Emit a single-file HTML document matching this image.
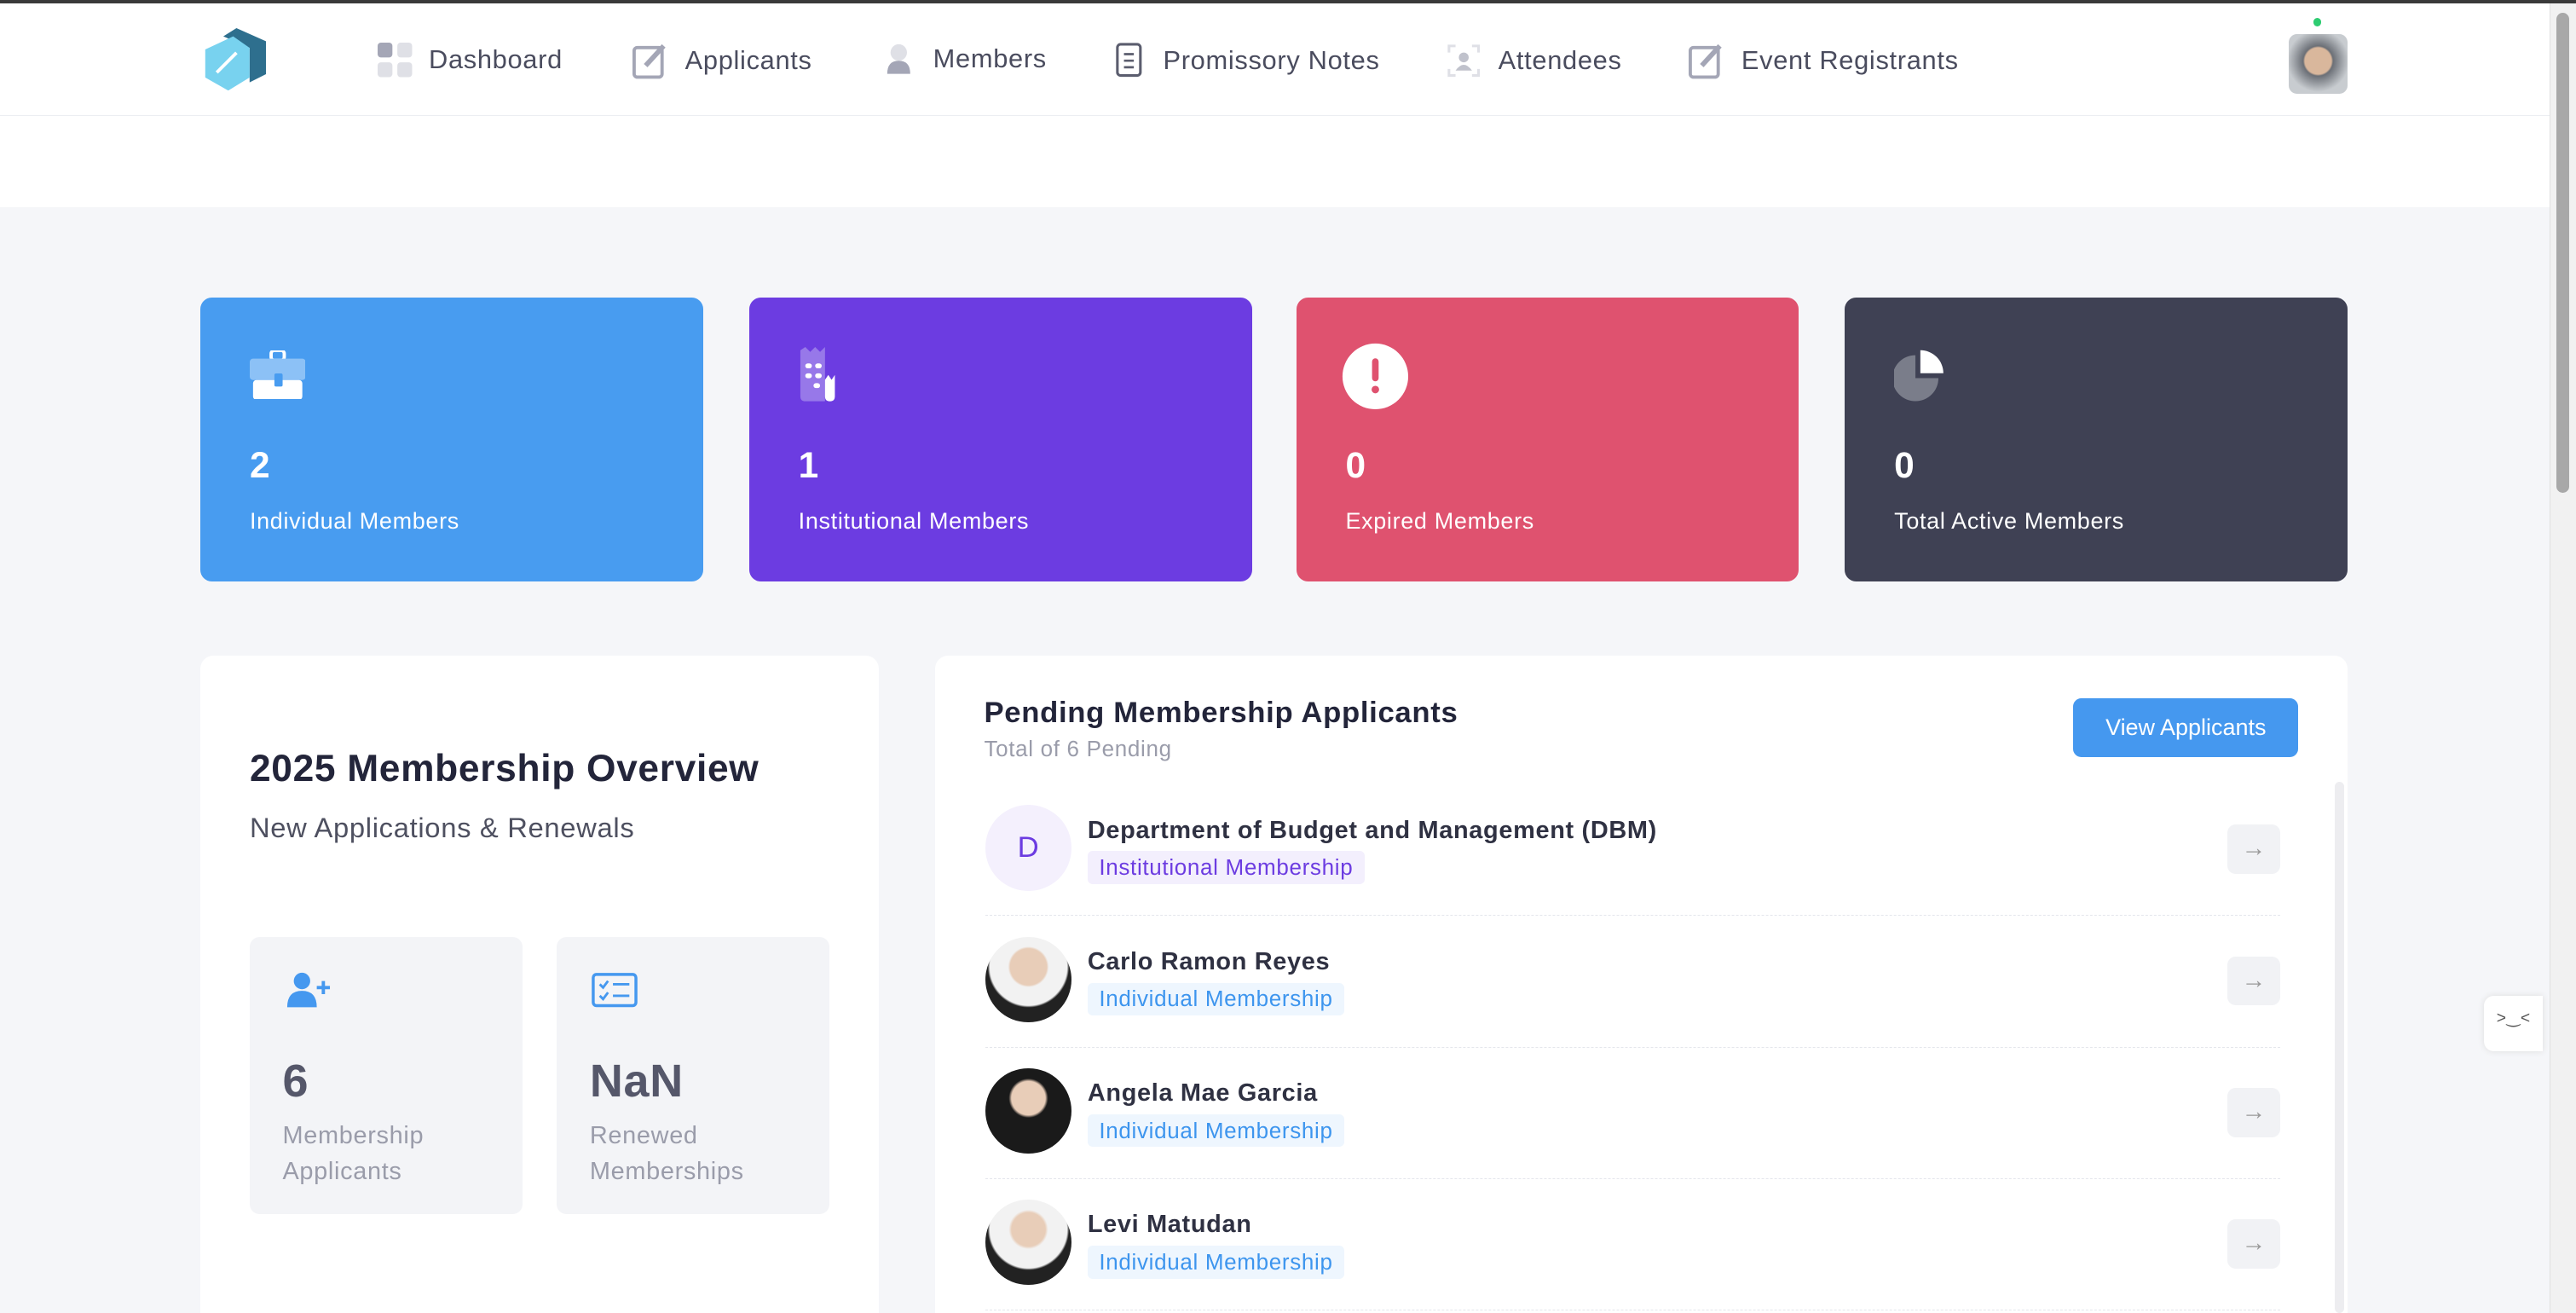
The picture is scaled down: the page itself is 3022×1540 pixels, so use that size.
<!DOCTYPE html>
<html><head><meta charset="utf-8"><style>
html,body{margin:0;padding:0;overflow:hidden;}
body{width:3022px;height:1540px;background:#f5f6f9;font-family:"Liberation Sans",sans-serif;}
#w{width:1568px;height:799px;zoom:1.92730;position:relative;background:#f5f6f9;overflow:hidden;color:#2b2d3b;letter-spacing:0.35px}
.abs{position:absolute}
.top{left:0;top:0;width:1552px;height:126px;background:#fff}
.hdr{left:0;top:2px;width:1552px;height:68px;border-bottom:1px solid #eceef2;background:#fff}
.nav{top:26px;font-size:16px;color:#4a4c5e;display:flex;align-items:center;gap:10px}
.card{top:181px;width:306px;height:173px;border-radius:7px;color:#fff}
.card .n{position:absolute;left:30px;top:90px;font-size:22px;font-weight:bold}
.card .l{position:absolute;left:30px;top:128px;font-size:14px}
.panel{background:#fff;border-radius:8px}
.row{left:600px;width:788px;height:79px;border-bottom:1px dashed #e4e6ec}
.av{position:absolute;left:0;top:12px;width:52px;height:52px;border-radius:50%;background:#ddd;overflow:hidden}
.nm{position:absolute;left:62px;top:19px;font-size:15px;font-weight:bold;color:#2f3142}
.tg{position:absolute;left:62px;top:40px;font-size:13.5px;padding:2px 7px;border-radius:3px}
.ind{background:#eef6fe;color:#3d95ee}
.arr{position:absolute;left:756px;top:24px;width:32px;height:30px;border-radius:5px;background:#f1f2f5;color:#999;text-align:center;line-height:30px;font-size:15px}
</style></head><body><div id="w">
<div class="abs top"></div>
<div class="abs hdr"></div>
<div class="abs" style="left:0;top:0;width:1568px;height:2px;background:#3a3a3a"></div>
<svg class="abs" style="left:122px;top:17px" width="40" height="38" viewBox="0 0 40 38"><polygon points="22,0 40,8 40,28 30,33 30,12 14,5" fill="#2e6f8e"/><polygon points="3,13 20,5 30,12 30,30 17,38 3,30" fill="#78d2ef"/><path d="M10,27 L22,15" stroke="#fff" stroke-width="2"/></svg>
<div class="abs nav" style="left:230px"><svg width="21" height="21"><rect x="0" y="0" width="9" height="9" rx="2" fill="#a4a6b6"/><rect x="12" y="0" width="9" height="9" rx="2" fill="#dfe0e6"/><rect x="0" y="12" width="9" height="9" rx="2" fill="#dfe0e6"/><rect x="12" y="12" width="9" height="9" rx="2" fill="#dfe0e6"/></svg>Dashboard</div>
<div class="abs nav" style="left:385px"><svg width="22" height="22"><rect x="1" y="3" width="17" height="18" rx="2" fill="none" stroke="#a4a6b6" stroke-width="2"/><path d="M8,14 L19,2" stroke="#a4a6b6" stroke-width="3"/></svg>Applicants</div>
<div class="abs nav" style="left:538px"><svg width="20" height="20"><circle cx="9" cy="6" r="5" fill="#dfe0e6"/><path d="M2,19 Q2,11 9,11 Q16,11 16,19Z" fill="#a4a6b6"/></svg>Members</div>
<div class="abs nav" style="left:678px"><svg width="20" height="22"><rect x="2" y="1" width="14" height="19" rx="2" fill="none" stroke="#5b5d6e" stroke-width="1.6"/><path d="M6,7H12M6,11H12M6,15H12" stroke="#5b5d6e" stroke-width="1.4"/></svg>Promissory Notes</div>
<div class="abs nav" style="left:880px"><svg width="22" height="22"><path d="M2,6V2H6M16,2H20V6M20,16V20H16M6,20H2V16" stroke="#dfe0e6" stroke-width="1.6" fill="none"/><circle cx="11" cy="9" r="3" fill="#c0c2cc"/><path d="M6,17Q11,10 16,17Z" fill="#c0c2cc"/></svg>Attendees</div>
<div class="abs nav" style="left:1028px"><svg width="22" height="22"><rect x="1" y="3" width="17" height="18" rx="2" fill="none" stroke="#a4a6b6" stroke-width="2"/><path d="M8,14 L19,2" stroke="#a4a6b6" stroke-width="3"/></svg>Event Registrants</div>
<div class="abs" style="left:1408px;top:11px;width:5px;height:5px;border-radius:50%;background:#2ecc71"></div>
<div class="abs" style="left:1393px;top:21px;width:36px;height:36px;border-radius:5px;background:radial-gradient(circle at 50% 45%,#d9b79c 30%,#6b6f76 34%,#c8ccd0 70%)"></div>
<div class="abs" style="left:1552px;top:2px;width:16px;height:797px;background:#f1f1f1;border-left:1px solid #e0e0e0"></div>
<div class="abs" style="left:1556px;top:8px;width:8px;height:292px;background:#a8a8a8;border-radius:4px"></div>
<div class="abs card" style="left:122px;background:#489cf0"><svg style="position:absolute;left:30px;top:32px" width="34" height="30"><rect x="13" y="0" width="8" height="6" rx="2" fill="none" stroke="#fff" stroke-width="2"/><rect x="0" y="5" width="34" height="13" rx="2" fill="#8cc1f6"/><rect x="2" y="18" width="30" height="12" rx="2" fill="#fff"/><rect x="15" y="14" width="5" height="8" rx="1" fill="#489cf0"/></svg><div class="n">2</div><div class="l">Individual Members</div></div>
<div class="abs card" style="left:456px;background:#6c3ce1"><svg style="position:absolute;left:30px;top:30px" width="34" height="34"><path d="M1,2 L4,0 L7,3 L10,0 L13,3 L16,0 L16,33 L4,33 Q1,33 1,30Z" fill="#9778e9"/><rect x="4" y="10" width="4" height="3" rx="1.5" fill="#fff"/><rect x="10" y="10" width="4" height="3" rx="1.5" fill="#fff"/><rect x="4" y="16" width="4" height="3" rx="1.5" fill="#fff"/><rect x="10" y="16" width="4" height="3" rx="1.5" fill="#fff"/><rect x="9" y="22" width="4" height="3" rx="1.5" fill="#fff"/><path d="M16,20 L18,17 L20,20 L22,17 L22,30 Q22,33 19,33 Q16,33 16,30Z" fill="#fff"/></svg><div class="n">1</div><div class="l">Institutional Members</div></div>
<div class="abs card" style="left:789px;background:#df526f"><svg style="position:absolute;left:27px;top:27px" width="42" height="42"><circle cx="21" cy="21" r="20" fill="#fff"/><rect x="19" y="10" width="4" height="14" rx="2" fill="#df526f"/><circle cx="21" cy="29" r="2.3" fill="#df526f"/></svg><div class="n">0</div><div class="l">Expired Members</div></div>
<div class="abs card" style="left:1123px;background:#3f4154"><svg style="position:absolute;left:30px;top:29px" width="36" height="36"><path d="M13,6 A14,14 0 1 0 27,20 L13,20Z" fill="#7a7d8a"/><path d="M16,3 A14,14 0 0 1 30,17 L16,17Z" fill="#fff"/></svg><div class="n">0</div><div class="l">Total Active Members</div></div>
<div class="abs panel" style="left:122px;top:399px;width:413px;height:420px"></div>
<div class="abs" style="left:152px;top:455px;font-size:23px;font-weight:bold;color:#23253a">2025 Membership Overview</div>
<div class="abs" style="left:152px;top:494px;font-size:17px;color:#4e5060">New Applications &amp; Renewals</div>
<div class="abs" style="left:152px;top:570px;width:166px;height:169px;background:#f3f4f7;border-radius:6px"></div>
<div class="abs" style="left:339px;top:570px;width:166px;height:169px;background:#f3f4f7;border-radius:6px"></div>
<svg class="abs" style="left:174px;top:591px" width="30" height="24"><circle cx="10" cy="6" r="5" fill="#4598ef"/><path d="M1,22 Q1,12 10,12 Q19,12 19,22Z" fill="#4598ef"/><path d="M23,6V14M19,10H27" stroke="#4598ef" stroke-width="2"/></svg>
<svg class="abs" style="left:360px;top:591px" width="30" height="24"><rect x="1" y="2" width="26" height="19" rx="2" fill="none" stroke="#4598ef" stroke-width="1.8"/><path d="M5,8L7,10L10,6M13,8H23M5,15L7,17L10,13M13,15H23" stroke="#4598ef" stroke-width="1.5" fill="none"/></svg>
<div class="abs" style="left:172px;top:642px;font-size:28px;font-weight:bold;color:#55576a">6</div>
<div class="abs" style="left:359px;top:642px;font-size:28px;font-weight:bold;color:#55576a">NaN</div>
<div class="abs" style="left:172px;top:680px;font-size:15px;color:#9a9caa;line-height:22px">Membership<br>Applicants</div>
<div class="abs" style="left:359px;top:680px;font-size:15px;color:#9a9caa;line-height:22px">Renewed<br>Memberships</div>
<div class="abs panel" style="left:569px;top:399px;width:860px;height:420px"></div>
<div class="abs" style="left:599px;top:424px;font-size:18px;font-weight:bold;color:#23253a">Pending Membership Applicants</div>
<div class="abs" style="left:599px;top:448px;font-size:13.5px;color:#9a9caa">Total of 6 Pending</div>
<div class="abs" style="left:1262px;top:425px;width:137px;height:36px;background:#4598ef;border-radius:5px;color:#fff;font-size:14px;text-align:center;line-height:36px;letter-spacing:0">View Applicants</div>
<div class="abs" style="left:1421px;top:476px;width:6px;height:323px;background:#ededf0;border-radius:3px"></div>
<div class="abs row" style="top:478px"><div class="av" style="background:#f4f0fd;color:#6c3ce1;text-align:center;line-height:52px;font-size:18px">D</div><div class="nm">Department of Budget and Management (DBM)</div><div class="tg" style="background:#f3effd;color:#6c3ce1">Institutional Membership</div><div class="arr">→</div></div>
<div class="abs row" style="top:558px"><div class="av" style="background:radial-gradient(circle at 50% 35%,#e8cdb8 26%,#f2f2f2 29%,#f2f2f2 55%,#222 58%)"></div><div class="nm">Carlo Ramon Reyes</div><div class="tg ind">Individual Membership</div><div class="arr">→</div></div>
<div class="abs row" style="top:638px"><div class="av" style="background:radial-gradient(circle at 50% 35%,#e8cdb8 24%,#1a1a1a 28%,#1a1a1a 100%)"></div><div class="nm">Angela Mae Garcia</div><div class="tg ind">Individual Membership</div><div class="arr">→</div></div>
<div class="abs row" style="top:718px"><div class="av" style="background:radial-gradient(circle at 50% 35%,#e8cdb8 24%,#f2f2f2 28%,#f2f2f2 55%,#222 58%)"></div><div class="nm">Levi Matudan</div><div class="tg ind">Individual Membership</div><div class="arr">→</div></div>
<div class="abs" style="left:1512px;top:606px;width:36px;height:34px;background:#fff;border-radius:6px 0 0 6px;box-shadow:0 0 4px #ddd;font-size:10px;color:#555;text-align:center;line-height:28px">&gt;‿&lt;</div>
</div></body></html>
